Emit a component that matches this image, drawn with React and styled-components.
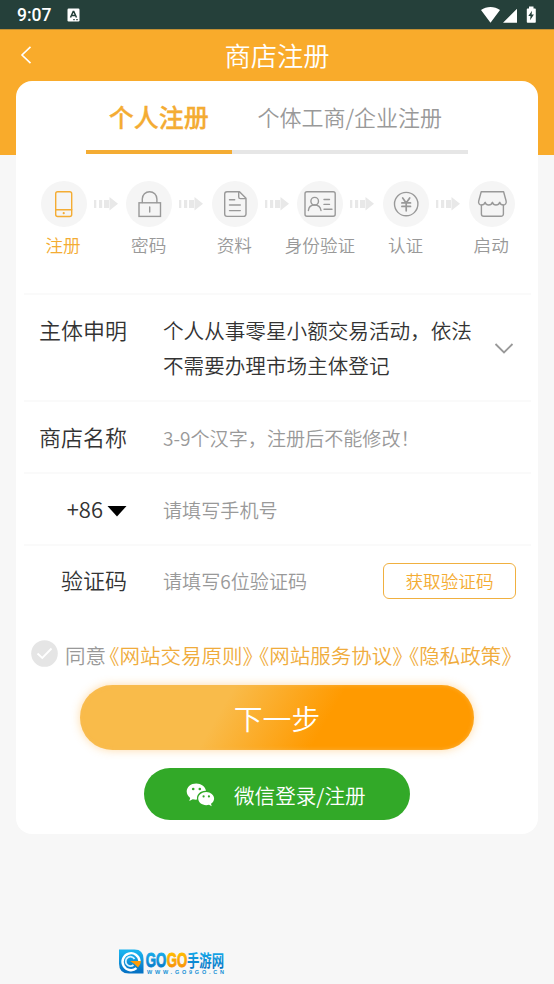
import React from "react";
import styled, { createGlobalStyle } from "styled-components";

const Global = createGlobalStyle`
  * { box-sizing: border-box; }
  body {
    margin: 0;
    background: #f7f7f7;
    font-family: "Noto Sans CJK SC", sans-serif;
    font-weight: 350;
  }
`;

const Page = styled.div`
  height: 984px;
  display: flex;
  flex-direction: column;
  overflow: hidden;
  background: linear-gradient(#f9ab2b 155px, #f7f7f7 155px);
`;

const StatusBar = styled.div`
  flex: none;
  height: 29px;
  display: flex;
  align-items: center;
  padding: 0 17px;
  background: #25403a;
  color: #fff;
  font: 500 17.5px/29px Roboto, sans-serif;
`;

const StatusTime = styled.span`
  width: 50px;
  padding-top: 2px;
`;

const StatusIcons = styled.svg`
  display: block;
  margin-left: auto;
`;

const Header = styled.header`
  flex: none;
  height: 52px;
  display: grid;
  grid-template-columns: 52px 1fr 52px;
  align-items: center;
  border-top: 1px solid #c08e33;
`;

const BackButton = styled.button`
  height: 40px;
  border: 0;
  padding: 0 0 2px 19px;
  background: none;
  svg { display: block; }
`;

const Title = styled.h1`
  margin: 0;
  padding-bottom: 2px;
  text-align: center;
  color: #fff;
  font-size: 26.3px;
  line-height: 38px;
  font-weight: 350;
`;

const Card = styled.main`
  flex: none;
  height: 753px;
  margin: 0 16px;
  display: flex;
  flex-direction: column;
  align-items: stretch;
  background: #fff;
  border-radius: 16px;
`;

const Tabs = styled.nav`
  display: flex;
  height: 73px;
  margin: 0 70px;
`;

const Tab = styled.div`
  width: ${(p) => p.$width}px;
  border-bottom: 4.5px solid ${(p) => (p.$active ? "#f4ac33" : "#e6e6e6")};
  color: ${(p) => (p.$active ? "#f4ac33" : "#999")};
  font-size: ${(p) => (p.$active ? 25 : 22)}px;
  font-weight: ${(p) => (p.$active ? 500 : 350)};
  -webkit-text-stroke: ${(p) => (p.$active ? "0.3px" : "0")};
  line-height: 70px;
  text-align: center;
  white-space: nowrap;
`;

const Steps = styled.ol`
  list-style: none;
  margin: 27px 3px 0 4.5px;
  padding: 0;
  height: 111.5px;
  display: grid;
  grid-template-columns: repeat(6, 85.65px);
`;

const Step = styled.li`
  display: grid;
  grid-template-columns: 86px 24px;
  align-content: start;
  color: ${(p) => (p.$active ? "#f4ac33" : "#999")};
`;

const StepCircle = styled.div`
  width: 46px;
  height: 46px;
  justify-self: center;
  border-radius: 50%;
  background: #f5f5f5;
  svg { display: block; }
`;

const StepArrow = styled.svg`
  margin: 16px 0 0 -13px;
`;

const StepLabel = styled.span`
  padding-right: 1px;
  font-size: 17.6px;
  line-height: 36px;
  text-align: center;
  white-space: nowrap;
`;

const Row = styled.div`
  flex: none;
  height: ${(p) => p.$height}px;
  margin: 0 7px 0 8px;
  padding-top: ${(p) => p.$top}px;
  border-top: 2px solid #fafafa;
  display: grid;
  grid-template-columns: 103px 321px 1fr;
  column-gap: 36px;
`;

const Label = styled.div`
  display: flex;
  justify-content: flex-end;
  align-items: center;
  height: 32px;
  color: #333;
  font-size: 22px;
  svg { margin: 6px 0 0 4px; }
`;

const Value = styled.p`
  margin: 0;
  color: #333;
  font-size: 20.6px;
  line-height: 35px;
`;

const Placeholder = styled.div`
  color: #999;
  font-size: 19.1px;
  line-height: 36px;
  white-space: nowrap;
`;

const Chevron = styled.svg`
  margin: 29px 0 0 -26px;
`;

const CodeRow = styled(Row)`
  grid-template-columns: 103px 184px 133px;
`;

const CodeButton = styled.button`
  height: 36px;
  padding: 0;
  border: 1.4px solid #f0b040;
  border-radius: 6px;
  background: #fff;
  color: #f4ac33;
  font: 350 17.6px/32px "Noto Sans CJK SC", sans-serif;
`;

const Agreement = styled.div`
  flex: none;
  display: flex;
  align-items: center;
  height: 32px;
  margin: 23.5px 0 0 15px;
  color: #999;
  font-size: 20.5px;
  line-height: 32px;
  white-space: nowrap;
  svg { margin: -2px 7px 0 0; }
`;

const Link = styled.a`
  margin: 0 3.2px 0 3.2px;
  color: #f0ac3c;
  font-feature-settings: "halt";
`;

const NextButton = styled.button`
  flex: none;
  align-self: center;
  width: 394px;
  height: 65px;
  margin-top: 14px;
  padding: 0;
  border: 0;
  border-radius: 33px;
  background: linear-gradient(120deg, #f9bb4a 36%, #ff9a00 62%);
  box-shadow: 0 0 10px rgba(255, 176, 60, 0.45), inset 0 0 4px rgba(250, 190, 90, 0.7);
  color: #fff;
  font: 350 28.8px/65px "Noto Sans CJK SC", sans-serif;
`;

const WechatButton = styled.button`
  flex: none;
  align-self: center;
  display: flex;
  align-items: center;
  width: 266px;
  height: 52px;
  margin-top: 18px;
  padding: 0 0 0 42px;
  border: 0;
  border-radius: 26px;
  background: #32a928;
  color: #fff;
  font: 350 20.6px/52px "Noto Sans CJK SC", sans-serif;
  svg { margin: 3px 19px 0 0; }
  span { padding-top: 2px; }
`;

const Watermark = styled.svg`
  flex: none;
  display: block;
  margin: 111px 0 0 116px;
`;

const Icon = ({ children }) => (
  <svg width="46" height="46" viewBox="0 0 46 46" fill="none" stroke="currentColor" strokeWidth="1.4" strokeLinejoin="round" strokeLinecap="round">
    {children}
  </svg>
);

const steps = [
  {
    label: "注册",
    icon: (
      <>
        <rect x="14.7" y="10.7" width="16" height="24.8" rx="2" />
        <path d="M14.7 28.7h16" />
        <circle cx="22.7" cy="32.2" r="1.1" fill="currentColor" stroke="none" />
      </>
    ),
  },
  {
    label: "密码",
    icon: (
      <>
        <rect x="13" y="21.8" width="21.5" height="13.6" strokeLinejoin="miter" />
        <path d="M16.3 21.5V18a7.3 7.3 0 0 1 14.6 0v3.5M23.7 26v5" />
      </>
    ),
  },
  {
    label: "资料",
    icon: (
      <>
        <path d="M27.5 10.8H15a2.3 2.3 0 0 0-2.3 2.3v20a2.3 2.3 0 0 0 2.3 2.3h16.700a2.300 2.300 0 0 0 2.300-2.300V17.300zM26.700 11v4.900a1.700 1.700 0 0 0 1.700 1.700H34" />
        <path d="M17.5 18.8h5.2M17.5 24h10.8M17.5 29.6h10.8" />
      </>
    ),
  },
  {
    label: "身份验证",
    icon: (
      <>
        <rect x="8" y="10.8" width="30.2" height="24.5" rx="2" />
        <circle cx="17.7" cy="20.2" r="3.8" />
        <path d="M11.4 29.5c.3-3.4 2.7-5.5 6.2-5.5s5.9 2.1 6.4 5.5M27 18.5h5.5M27 23.4h5.5M27 28.2h8" />
      </>
    ),
  },
  {
    label: "认证",
    icon: (
      <>
        <circle cx="23.2" cy="23.1" r="11.7" />
        <path d="m19.7 17 3.5 5.1 3.5-5.1M18.9 21.9h8.6M18.9 25.4h8.6M23.2 22v7.8" strokeWidth="1.7" />
      </>
    ),
  },
  {
    label: "启动",
    icon: (
      <>
        <path d="M12.2 10.8h22.4l2.5 9.2c.6 2.2-.9 4-2.7 4-1.7 0-3.2-1-3.7-2.7-.5 1.7-2 2.7-3.7 2.7s-3.1-1-3.6-2.7c-.5 1.7-2 2.7-3.7 2.7S16.6 23 16.1 21.3c-.5 1.7-2 2.7-3.7 2.7-1.9 0-3.3-1.8-2.7-4z" />
        <path d="M12.4 24.2v8.8a2.3 2.3 0 0 0 2.3 2.3h17.4a2.3 2.3 0 0 0 2.3-2.3v-8.8" />
      </>
    ),
  },
];

const Arrow = () => (
  <StepArrow width="24" height="14" viewBox="0 0 24 14" fill="#e8e8e8">
    <path d="M0 3h2.3v8H0zM5 3h3.2v8H5zM10 3h5v8h-5zM15.5 0 24 6.8l-8.5 6.7z" />
  </StepArrow>
);

export default function App() {
  return (
    <Page>
      <Global />
      <StatusBar>
        <StatusTime>9:07</StatusTime>
        <svg width="13" height="14" viewBox="0 0 13 14">
          <rect x="0.5" y="0.5" width="12" height="13" rx="1.2" fill="#fff" />
          <path d="m3.5 9.5 2.7-6h.6l2.7 6M4.5 7.5h4" fill="none" stroke="#25403a" strokeWidth="1.5" />
          <path d="M6 11.7h2M9 11.7h2" stroke="#25403a" strokeWidth="0.9" />
        </svg>
        <StatusIcons width="56" height="18" viewBox="0 0 56 18" fill="#fff">
          <path d="M0 4C5.5 0 13.5 0 19 4L9.5 16.8zM36 2.8v13.900H22zM48 2.500V.500h4.500v2H54q.8 0 .8.800v12.600q0 .8-.8.800h-7.400q-.8 0-.8-.8V3.300q0-.8.8-.8z" />
          <path d="m51 4.800-3.700 5.300h2.200l-.4 4.100 3.800-5.600h-2.300z" fill="#25403a" />
        </StatusIcons>
      </StatusBar>
      <Header>
        <BackButton aria-label="返回">
          <svg width="14" height="20" viewBox="0 0 14 20" fill="none" stroke="#fff" strokeWidth="1.6">
            <path d="M11.5 1.8 3 10l8.5 8.2" />
          </svg>
        </BackButton>
        <Title>商店注册</Title>
      </Header>
      <Card>
        <Tabs>
          <Tab $width={145.5} $active>个人注册</Tab>
          <Tab $width={236.5}>个体工商/企业注册</Tab>
        </Tabs>
        <Steps>
          {steps.map((s, i) => (
            <Step key={s.label} $active={i === 0}>
              <StepCircle><Icon>{s.icon}</Icon></StepCircle>
              {i < steps.length - 1 ? <Arrow /> : <span />}
              <StepLabel>{s.label}</StepLabel>
            </Step>
          ))}
        </Steps>
        <Row $height={107.5} $top={18}>
          <Label>主体申明</Label>
          <Value>个人从事零星小额交易活动，依法不需要办理市场主体登记</Value>
          <Chevron width="20" height="14" viewBox="0 0 20 14" fill="none" stroke="#999" strokeWidth="1.8">
            <path d="m1.5 2 8.5 8.5L18.500 2" />
          </Chevron>
        </Row>
        <Row $height={72} $top={18}>
          <Label>商店名称</Label>
          <Placeholder>3-9个汉字，注册后不能修改！</Placeholder>
        </Row>
        <Row $height={71.5} $top={18}>
          <Label>
            +86
            <svg width="20" height="11" viewBox="0 0 20 11"><path d="M.5 0h19L10 10.5z" /></svg>
          </Label>
          <Placeholder>请填写手机号</Placeholder>
        </Row>
        <CodeRow $height={71.5} $top={17.5}>
          <Label>验证码</Label>
          <Placeholder>请填写6位验证码</Placeholder>
          <CodeButton>获取验证码</CodeButton>
        </CodeRow>
        <Agreement>
          <svg width="27" height="27" viewBox="0 0 27 27">
            <circle cx="13.5" cy="13.5" r="13.3" fill="#e5e5e5" />
            <path d="m6.5 13.5 4.8 4.5 9.2-9.5" fill="none" stroke="#fff" strokeWidth="1.8" />
          </svg>
          同意
          <Link>《网站交易原则》</Link>
          <Link>《网站服务协议》</Link>
          <Link>《隐私政策》</Link>
        </Agreement>
        <NextButton>下一步</NextButton>
        <WechatButton>
          <svg width="29" height="24" viewBox="0 0 29 24" fill="#fff">
            <path d="M10.3.5C4.800.5.7 4 .7 8.600c0 2.600 1.300 4.800 3.500 6.300l-.9 3 3.400-1.700c1.500.4 2.900.6 4.400.4-1.100-5 3.500-9.300 8.900-8.900C19.200 3.400 15 .5 10.300.5z" />
            <path d="M20.2 8.900c-4.500 0-8 3-8 6.700s3.500 6.600 8 6.600c1 0 1.900-.1 2.800-.4l2.700 1.500-.7-2.500c1.900-1.300 3.100-3.100 3.100-5.200 0-3.700-3.500-6.700-7.900-6.700z" />
            <g fill="#32a928">
              <circle cx="7.2" cy="6" r="1.3" /><circle cx="13.8" cy="6" r="1.3" />
              <circle cx="17.6" cy="13.4" r="1.1" /><circle cx="22.9" cy="13.4" r="1.1" />
            </g>
          </svg>
          <span>微信登录/注册</span>
        </WechatButton>
      </Card>
      <Watermark width="120" height="32" viewBox="0 0 120 32">
        <defs>
          <linearGradient id="logoBlue" x1="0" y1="0" x2="0" y2="1">
            <stop offset="0.1" stopColor="#19b2ee" /><stop offset="0.9" stopColor="#0674c5" />
          </linearGradient>
          <linearGradient id="logoOrange" x1="0" y1="0" x2="0" y2="1">
            <stop offset="0.1" stopColor="#ffc400" /><stop offset="0.9" stopColor="#f78a06" />
          </linearGradient>
        </defs>
        <path d="M3 4.500h15.500Q27.500 4.500 27.500 14v14.500H13Q3 28.500 3 18.500z" fill="url(#logoBlue)" />
        <path d="M23.500 16a8.500 8.500 0 1 0-3 7.200" fill="none" stroke="#fff" strokeWidth="2.400" />
        <path d="M18.500 14a4.700 4.700 0 1 0-1 6" fill="none" stroke="#d5f1ff" strokeWidth="1.800" />
        <path d="M14 16h11q0 3.500-3 6.500-3.500-4-8-6.500z" fill="#ff9d09" />
        <g fontFamily="Liberation Sans, sans-serif" fontWeight="700" fontSize="21">
          <text transform="translate(29.800 22.300) scale(.63 1)" fill="url(#logoBlue)" stroke="url(#logoBlue)" strokeWidth="0.900">GO</text>
          <text transform="translate(50.700 22.300) scale(.63 1)" fill="url(#logoOrange)" stroke="url(#logoOrange)" strokeWidth="0.900">GO</text>
        </g>
        <text transform="translate(71 21.500) scale(.75 1)" fontFamily="Noto Sans CJK SC, sans-serif" fontWeight="700" fontSize="16.500" fill="url(#logoBlue)">手游网</text>
        <text x="31" y="29.300" textLength="77" fontFamily="Liberation Sans, sans-serif" fontWeight="700" fontSize="5.500" fill="#168fd6">WWW.GO9GO.CN</text>
      </Watermark>
    </Page>
  );
}
